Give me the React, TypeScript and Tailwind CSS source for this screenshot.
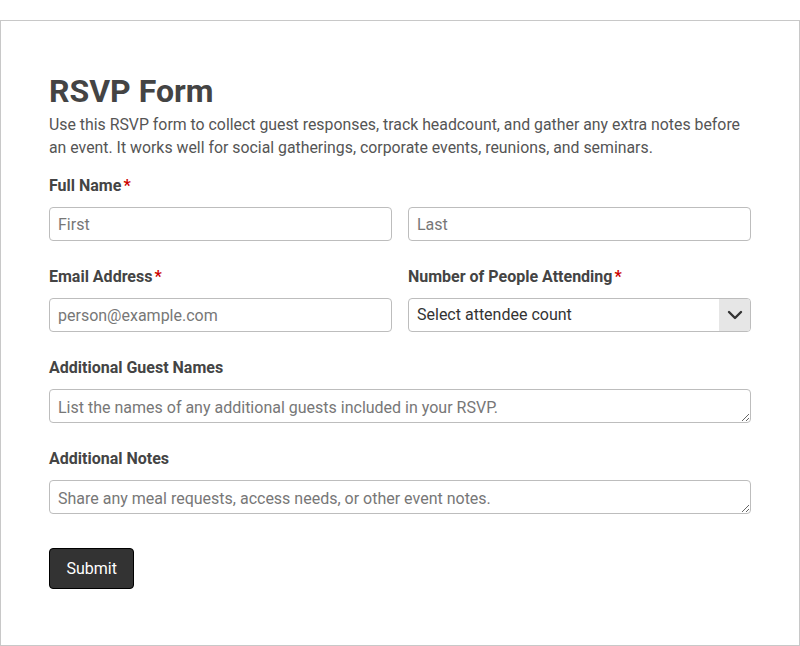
import { ChevronDown } from "lucide-react";

const font = { fontFamily: "Roboto, 'Liberation Sans', sans-serif" };

function Label({ text, required }: { text: string; required?: boolean }) {
  return (
    <div className="mb-[11px] h-[20px] text-[16px] leading-[20px] font-bold text-[#444]">
      {text}
      {required && <span className="ml-[2px] text-[#c00]">*</span>}
    </div>
  );
}

function TextInput({ placeholder }: { placeholder: string }) {
  return (
    <input
      type="text"
      placeholder={placeholder}
      className="block h-[34px] w-full rounded-[4px] border border-[#bdbdbd] bg-white px-[8px] text-[16px] text-[#333] placeholder:text-[#777] outline-none"
    />
  );
}

function TextArea({ placeholder }: { placeholder: string }) {
  return (
    <textarea
      placeholder={placeholder}
      rows={1}
      className="block h-[34px] w-full resize-y rounded-[4px] border border-[#bdbdbd] bg-white px-[8px] pt-[7px] pb-[3px] text-[16px] leading-[22px] text-[#333] placeholder:text-[#777] outline-none"
    />
  );
}

export default function App() {
  return (
    <div className="bg-white pt-[20px]" style={font}>
      <div className="h-[626px] border border-[#c8c8c8] px-[48px] pt-[50px]">
        {/* Header */}
        <h1 className="text-[32px] leading-[40px] font-bold text-[#444]">RSVP Form</h1>
        <p className="mt-[2px] text-[15.85px] leading-[23px] text-[#555]">
          Use this RSVP form to collect guest responses, track headcount, and gather any extra notes before
          an event. It works well for social gatherings, corporate events, reunions, and seminars.
        </p>

        {/* Fields */}
        <div className="mt-[17px] flex flex-col gap-[26px]">
          <div>
            <Label text="Full Name" required />
            <div className="grid grid-cols-2 gap-[16px]">
              <TextInput placeholder="First" />
              <TextInput placeholder="Last" />
            </div>
          </div>

          <div className="grid grid-cols-2 gap-[16px]">
            <div>
              <Label text="Email Address" required />
              <TextInput placeholder="person@example.com" />
            </div>
            <div>
              <Label text="Number of People Attending" required />
              <div className="flex h-[34px] w-full overflow-hidden rounded-[4px] border border-[#bdbdbd] bg-white">
                <div className="flex flex-1 items-center px-[8px] text-[16px] text-[#333]">
                  Select attendee count
                </div>
                <div className="flex w-[31px] items-center justify-center bg-[#e6e6e6]">
                  <ChevronDown size={24} strokeWidth={2.4} className="text-[#333]" />
                </div>
              </div>
            </div>
          </div>

          <div>
            <Label text="Additional Guest Names" />
            <TextArea placeholder="List the names of any additional guests included in your RSVP." />
          </div>

          <div>
            <Label text="Additional Notes" />
            <TextArea placeholder="Share any meal requests, access needs, or other event notes." />
          </div>
        </div>

        <button className="mt-[34px] h-[41px] rounded-[4px] border border-black bg-[#333] px-[16.5px] text-[16px] text-white">
          Submit
        </button>
      </div>
    </div>
  );
}
